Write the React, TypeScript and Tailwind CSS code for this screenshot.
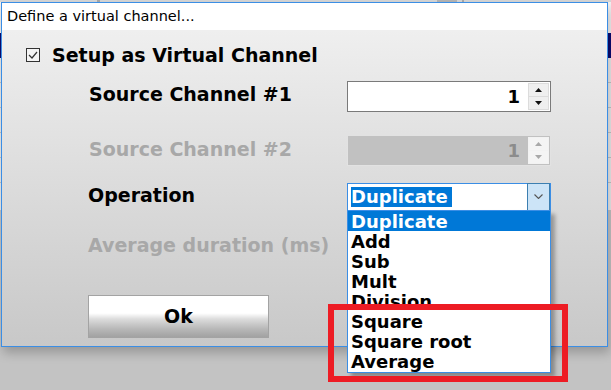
const font = { fontFamily: '"DejaVu Sans", Verdana, sans-serif' };

const items = ["Duplicate", "Add", "Sub", "Mult", "Division", "Square", "Square root", "Average"];

const SpinBox = ({ disabled }: { disabled?: boolean }) => (
  <div
    className={`flex h-[31px] w-[204px] items-center border ${
      disabled ? "border-[#e2e2e2] bg-[#c1c1c1]" : "border-[#7a7a7a] bg-white"
    }`}
  >
    <span
      className={`flex-1 pr-[8px] text-right text-[18px] font-bold ${
        disabled ? "text-[#8c8c8c]" : "text-black"
      }`}
    >
      1
    </span>
    <div
      className={`mr-[1px] flex h-[27px] w-[21px] flex-col gap-px p-px ${
        disabled ? "bg-[#f2f2f2]" : "bg-[#dcdcdc]"
      }`}
    >
      {[0, 1].map((i) => (
        <div
          key={i}
          className={`flex flex-1 items-center justify-center ${
            disabled ? "bg-[#f4f4f4]" : "bg-[#efefef]"
          }`}
        >
          <svg width="7" height="4" viewBox="0 0 7 4">
            <path
              d={i === 0 ? "M0 4 L3.5 0 L7 4 Z" : "M0 0 L3.5 4 L7 0 Z"}
              fill={disabled ? "#a8a8a8" : "#111"}
            />
          </svg>
        </div>
      ))}
    </div>
  </div>
);

export default function App() {
  return (
    <div className="relative h-[390px] w-[611px] overflow-hidden bg-[#c3c3c3]" style={font}>
      {/* window underneath */}
      <div className="flex h-[210px] flex-col bg-[#ebebeb]">
        <div className="flex h-[2px] bg-[#d6d6d6]">
          <div className="ml-[97px] w-[3px] bg-[#a8a8a8]" />
          <div className="ml-[337px] w-[20px] bg-[#b4b4b4]" />
          <div className="ml-[5px] w-[2px] bg-[#a8a8a8]" />
        </div>
        <div className="h-[31px] bg-[#f2f2f2]" />
        <div className="h-[25px] bg-[#0a0a70]" />
        {[0, 1, 2, 3, 4].map((i) => (
          <div key={i} className="h-[25px] border-b border-[#c4c4c4]" />
        ))}
      </div>

      {/* dialog */}
      <div className="absolute left-[1px] top-[2px] flex h-[345px] w-[607px] flex-col border border-[#3b8ee5] shadow-[2px_6px_10px_rgba(0,0,0,0.22)]">
        <div className="flex h-[27px] items-center bg-white pl-[5px] text-[14.5px] text-black">
          Define a virtual channel...
        </div>
        <div className="flex flex-1 flex-col bg-gradient-to-b from-[#efefef] to-[#c8c8c8]">
          <div className="mt-[16px] flex h-[18px] items-center pl-[24px]">
            <div className="flex h-[14px] w-[14px] items-center justify-center border border-[#333] bg-[#f4f4f4]">
              <svg width="10" height="8" viewBox="0 0 10 8">
                <path d="M1 4 L4 7 L9 1" fill="none" stroke="#333" strokeWidth="1.2" />
              </svg>
            </div>
            <span className="ml-[12px] text-[19px] font-bold text-black">Setup as Virtual Channel</span>
          </div>

          <div className="mt-[16px] flex items-center pl-[87px]">
            <span className="mb-[4px] w-[258px] text-[19px] font-bold text-black">Source Channel #1</span>
            <SpinBox />
          </div>

          <div className="mt-[22px] flex items-center pl-[87px]">
            <span className="mb-[4px] w-[258px] text-[19px] font-bold text-[#a8a8a8]">Source Channel #2</span>
            <SpinBox disabled />
          </div>

          <div className="mt-[14px] flex items-center pl-[86px]">
            <span className="mb-[3px] w-[259px] text-[19px] font-bold text-black">Operation</span>
            <div className="flex h-[28px] w-[204px] items-center border border-[#3b8ee5] bg-white">
              <span className="ml-[3px] bg-[#0078d7] pr-[4px] text-[18px] font-bold leading-[20px] text-white">
                Duplicate
              </span>
              <div className="ml-auto flex h-[28px] w-[23px] items-center justify-center border border-[#3c7fb1] bg-[#cce4f7]">
                <svg width="9" height="5" viewBox="0 0 9 5">
                  <path d="M0.5 0.5 L4.5 4.5 L8.5 0.5" fill="none" stroke="#555" strokeWidth="1.1" />
                </svg>
              </div>
            </div>
          </div>

          <div className="mt-[20px] flex h-[28px] items-center pl-[86px]">
            <span className="mb-[3px] text-[19px] font-bold text-[#a8a8a8]">Average duration (ms)</span>
          </div>

          <div className="mt-[34px] pl-[86px]">
            <button className="flex h-[43px] w-[181px] items-center justify-center border border-[#a3a3a3] bg-[linear-gradient(to_bottom,#ffffff_0%,#ffffff_42%,#dcdcdc_56%,#b8b8b8_80%,#a2a2a2_100%)] text-[19px] font-bold text-black">
              Ok
            </button>
          </div>
        </div>
      </div>

      {/* open dropdown list */}
      <div className="absolute left-[347px] top-[210px] flex h-[163px] w-[204px] flex-col border border-[#3b8ee5] bg-white shadow-[4px_4px_4px_rgba(0,0,0,0.3)]">
        {items.map((it, i) => (
          <div
            key={it}
            className={`flex h-[20px] shrink-0 items-center pl-[3px] text-[18px] font-bold ${
              i === 0 ? "bg-[#0078d7] text-white" : "text-black"
            }`}
          >
            {it}
          </div>
        ))}
      </div>

      {/* annotation */}
      <div className="absolute left-[328px] top-[304px] h-[78px] w-[240px] border-[6px] border-[#ed1c24]" />
    </div>
  );
}
